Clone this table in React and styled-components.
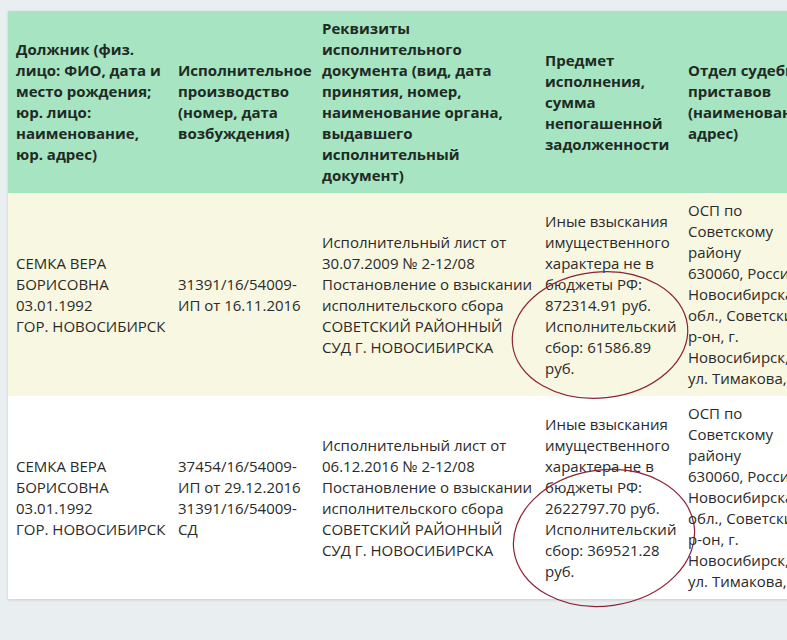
import React from "react";
import styled, { createGlobalStyle } from "styled-components";

const GlobalStyle = createGlobalStyle`
  html, body {
    margin: 0;
    padding: 0;
    background: #e9eef1;
    overflow: hidden;
  }

  body {
    font-family: "Open Sans", "Noto Sans", sans-serif;
    color: #222;
  }
`;

const Page = styled.div`
  padding: 11px 0 0 8px;
  min-height: 640px;
  box-sizing: border-box;
`;

const Card = styled.div`
  width: 816px;
  background: #fff;
  box-shadow: 0 1px 3px rgba(0, 0, 0, 0.14);
`;

const Table = styled.table`
  border-collapse: collapse;
  table-layout: fixed;
  width: 816px;
  font-size: 15px;
  line-height: 21px;
`;

const HeadRow = styled.tr`
  background: #a6e4c2;
`;

const Row = styled.tr`
  background: ${p => (p.$tinted ? "#f8f7e2" : "#fff")};
`;

const Th = styled.th`
  padding: 7px 4px 7px 8px;
  text-align: left;
  vertical-align: middle;
  font-weight: 700;
  color: #1f2a24;
`;

const Td = styled.td`
  position: relative;
  padding: 7px 4px 7px 8px;
  vertical-align: middle;
  font-weight: 400;
  color: #2a2a2a;
`;

const Mark = styled.svg`
  position: absolute;
  left: 0;
  top: 0;
  width: 100%;
  height: 100%;
  pointer-events: none;
  overflow: visible;
`;

const office = ["ОСП по Советскому району", "630060, Россия, Новосибирская обл., Советский р-он, г. Новосибирск, ул.\u00a0Тимакова, 8"];

const rows = [
  {
    debtor: ["СЕМКА ВЕРА БОРИСОВНА", "03.01.1992", "ГОР. НОВОСИБИРСК"],
    proceeding: ["31391/16/54009-ИП от 16.11.2016"],
    doc: "Исполнительный лист от 30.07.2009 № 2-12/08 Постановление о взыскании исполнительского сбора СОВЕТСКИЙ РАЙОННЫЙ СУД Г. НОВОСИБИРСКА",
    subject: "Иные взыскания имущественного характера не в бюджеты РФ: 872314.91 руб. Исполнительский сбор: 61586.89 руб.",
    ring: { cx: 63, cy: 142, rx: 88, ry: 63, tilt: -6 }
  },
  {
    debtor: ["СЕМКА ВЕРА БОРИСОВНА", "03.01.1992", "ГОР. НОВОСИБИРСК"],
    proceeding: ["37454/16/54009-ИП от 29.12.2016", "31391/16/54009-СД"],
    doc: "Исполнительный лист от 06.12.2016 № 2-12/08 Постановление о взыскании исполнительского сбора СОВЕТСКИЙ РАЙОННЫЙ СУД Г. НОВОСИБИРСКА",
    subject: "Иные взыскания имущественного характера не в бюджеты РФ: 2622797.70 руб. Исполнительский сбор: 369521.28 руб.",
    ring: { cx: 67, cy: 142, rx: 91, ry: 68, tilt: -8 }
  }
];

const Lines = ({ items }) =>
  items.map((t, i) => (
    <React.Fragment key={i}>
      {i > 0 && <br />}
      {t}
    </React.Fragment>
  ));

// hand-drawn red ring around the amounts
const Ring = ({ cx, cy, rx, ry, tilt }) => (
  <Mark>
    <ellipse
      cx={cx}
      cy={cy}
      rx={rx}
      ry={ry}
      transform={`rotate(${tilt} ${cx} ${cy})`}
      fill="none"
      stroke="#8c2236"
      strokeWidth="1.2"
    />
  </Mark>
);

export default function App() {
  return (
    <>
      <GlobalStyle />
      <Page>
        <Card>
          <Table>
            <colgroup>
              <col style={{ width: 162 }} />
              <col style={{ width: 144 }} />
              <col style={{ width: 223 }} />
              <col style={{ width: 143 }} />
              <col style={{ width: 144 }} />
            </colgroup>
            <thead>
              <HeadRow>
                <Th>Должник (физ. лицо: ФИО, дата и место рождения; юр. лицо: наименование, юр.{"\u00a0"}адрес)</Th>
                <Th>Исполнительное производство (номер, дата возбуждения)</Th>
                <Th>Реквизиты исполнительного документа (вид, дата принятия, номер, наименование органа, выдавшего исполнительный документ)</Th>
                <Th>Предмет исполнения, сумма непогашенной задолженности</Th>
                <Th>Отдел судебных приставов (наименование, адрес)</Th>
              </HeadRow>
            </thead>
            <tbody>
              {rows.map((r, i) => (
                <Row key={i} $tinted={i === 0}>
                  <Td><Lines items={r.debtor} /></Td>
                  <Td><Lines items={r.proceeding} /></Td>
                  <Td>{r.doc}</Td>
                  <Td>
                    {r.subject}
                    <Ring {...r.ring} />
                  </Td>
                  <Td><Lines items={office} /></Td>
                </Row>
              ))}
            </tbody>
          </Table>
        </Card>
      </Page>
    </>
  );
}
